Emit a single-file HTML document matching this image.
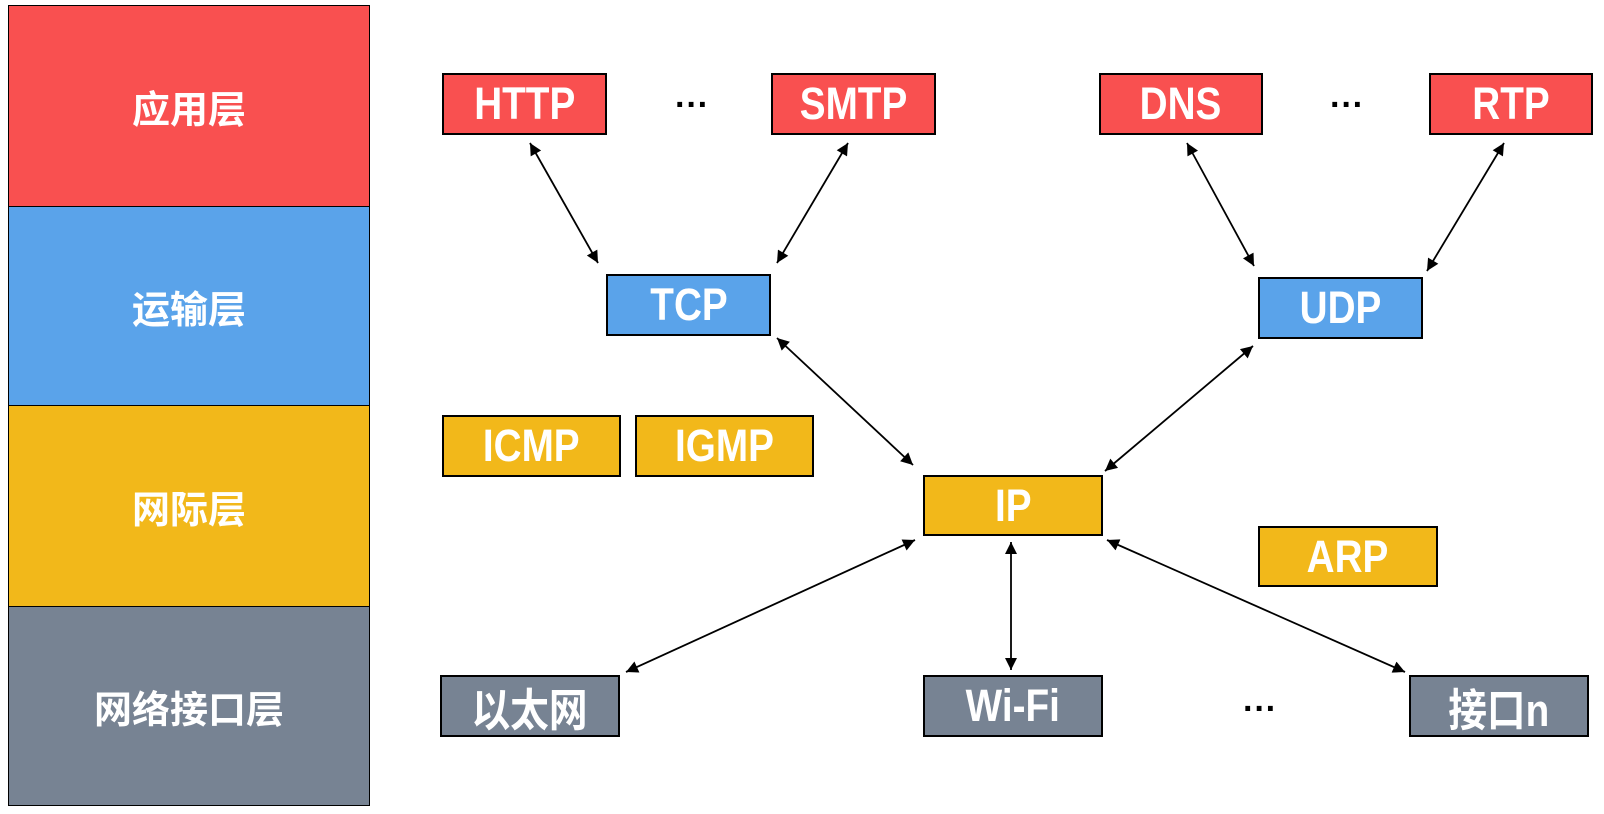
<!DOCTYPE html>
<html><head><meta charset="utf-8"><style>
body{margin:0;width:1604px;height:814px;background:#fff;position:relative;overflow:hidden;font-family:"Liberation Sans","Noto Sans CJK SC",sans-serif}
.l{position:absolute;left:8px;width:362px;border:1.5px solid #000;box-sizing:border-box;color:#fff;font-weight:bold;font-size:38px;display:flex;align-items:center;justify-content:center}
.b{position:absolute;border:2px solid #000;box-sizing:border-box;color:#fff;font-weight:bold;font-size:45px;display:flex;align-items:center;justify-content:center}
.b span{display:inline-block;transform:scaleX(0.86)}
.r{background:#f95050}.u{background:#5aa3ea}.y{background:#f2b81a}.g{background:#778393}
.d{position:absolute;font-size:34px;font-weight:bold;color:#000}
</style></head><body>
<div class="l r" style="top:5px;height:202px">应用层</div>
<div class="l u" style="top:206px;height:200px">运输层</div>
<div class="l y" style="top:405px;height:202px">网际层</div>
<div class="l g" style="top:606px;height:200px">网络接口层</div>

<div class="b r" style="left:442px;top:73px;width:165px;height:62px"><span>HTTP</span></div>
<div class="b r" style="left:771px;top:73px;width:165px;height:62px"><span>SMTP</span></div>
<div class="b r" style="left:1099px;top:73px;width:164px;height:62px"><span>DNS</span></div>
<div class="b r" style="left:1429px;top:73px;width:164px;height:62px"><span>RTP</span></div>
<div class="b u" style="left:606px;top:274px;width:165px;height:62px"><span>TCP</span></div>
<div class="b u" style="left:1258px;top:277px;width:165px;height:62px"><span>UDP</span></div>
<div class="b y" style="left:442px;top:415px;width:179px;height:62px"><span>ICMP</span></div>
<div class="b y" style="left:635px;top:415px;width:179px;height:62px"><span>IGMP</span></div>
<div class="b y" style="left:923px;top:475px;width:180px;height:61px"><span>IP</span></div>
<div class="b y" style="left:1258px;top:526px;width:180px;height:61px"><span>ARP</span></div>
<div class="b g" style="left:440px;top:675px;width:180px;height:62px"><span>以太网</span></div>
<div class="b g" style="left:923px;top:675px;width:180px;height:62px"><span>Wi-Fi</span></div>
<div class="b g" style="left:1409px;top:675px;width:180px;height:62px"><span>接口n</span></div>

<div class="d" style="left:675px;top:86px">···</div>
<div class="d" style="left:1330px;top:86px">···</div>
<div class="d" style="left:1243px;top:690px">···</div>

<svg width="1604" height="814" style="position:absolute;left:0;top:0">
<defs>
<marker id="m" viewBox="0 0 10 10" refX="10" refY="5" markerWidth="18" markerHeight="12" orient="auto-start-reverse" markerUnits="userSpaceOnUse"><path d="M0 0L10 5L0 10z"/></marker></defs>
<g stroke="#000" stroke-width="1.8" marker-start="url(#m)" marker-end="url(#m)">
<line x1="530" y1="143" x2="598" y2="263"/>
<line x1="848" y1="143" x2="777" y2="263"/>
<line x1="1187" y1="143" x2="1254" y2="266"/>
<line x1="1504" y1="143" x2="1427" y2="271"/>
<line x1="777" y1="338" x2="913" y2="465"/>
<line x1="1253" y1="346" x2="1105" y2="471"/>
<line x1="915" y1="540" x2="626" y2="672"/>
<line x1="1011" y1="542" x2="1011" y2="670"/>
<line x1="1107" y1="540" x2="1405" y2="672"/>
</g></svg>
</body></html>
